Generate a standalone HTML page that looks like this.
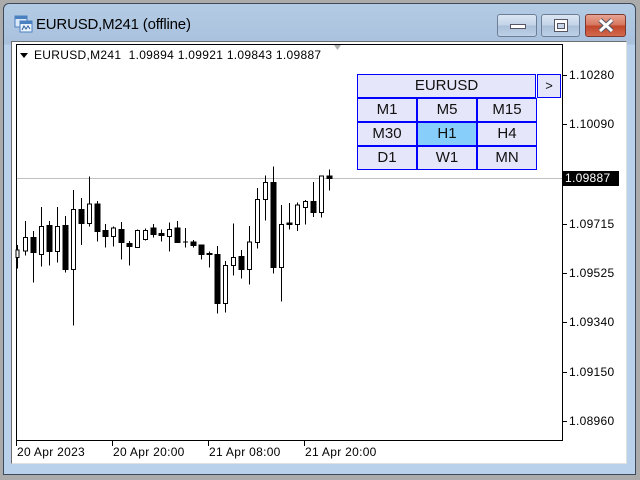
<!DOCTYPE html>
<html><head><meta charset="utf-8"><style>
*{margin:0;padding:0;box-sizing:border-box}
body{width:640px;height:480px;background:#ababab;position:relative;overflow:hidden;font-family:"Liberation Sans",Tahoma,sans-serif}
.frame{position:absolute;left:3px;top:3px;width:633px;height:472px;border:1px solid #3c4a5a;border-radius:6px 6px 0 0;background:linear-gradient(#b4cbe4 0px,#a9c1dd 40px,#b9d1ea 41px,#b9d1ea 100%)}
.client{position:absolute;left:11px;top:41px;width:616px;height:423px;background:#fff;border-left:1px solid #6c6c6c;border-top:1px solid #6c6c6c;border-right:1px solid #e0e0e0;border-bottom:1px solid #e0e0e0}
.title{position:absolute;left:36px;top:16px;font-size:15px;color:#000;letter-spacing:-0.2px}
.btn{position:absolute;top:14px;height:23px;border:1px solid #6d7f96;border-radius:3px;background:linear-gradient(#dbe6f3,#c2d3e8 50%,#aabfd9 51%,#bdd0e6)}
.close{background:linear-gradient(#e8a493,#d4745c 50%,#c0452a 51%,#d36a4e);border-color:#7a3a30}
.t{position:absolute;font-size:12px;color:#000;white-space:nowrap;letter-spacing:0.3px}
.pb{position:absolute;border:1px solid #0000ff;background:#e6e6fa;font-size:15px;text-align:center;line-height:22px;color:#111}
</style></head><body>
<div class="frame"></div>
<svg style="position:absolute;left:14px;top:15px" width="20" height="20">
<rect x="1" y="1" width="12" height="11" fill="#dbe8f8" stroke="#4a7fc0"/><rect x="1" y="1" width="12" height="3" fill="#4a7fc0"/>
<rect x="6" y="6" width="12" height="11" fill="#eaf2fc" stroke="#4a7fc0"/><rect x="6" y="6" width="12" height="3" fill="#4a7fc0"/>
<path d="M8 15 L10 11 L12 14 L14 11 L16 14" stroke="#2a5fa0" fill="none"/></svg>
<div class="title">EURUSD,M241 (offline)</div>
<div class="btn" style="left:497px;width:40px"><div style="position:absolute;left:12px;top:9px;width:16px;height:5px;background:#fff;border:1px solid #556"></div></div>
<div class="btn" style="left:541px;width:39px"><div style="position:absolute;left:12px;top:4px;width:14px;height:13px;background:#fff;border:1px solid #556"></div><div style="position:absolute;left:15px;top:8px;width:8px;height:6px;background:#c8d6e8;border:1px solid #556"></div></div>
<div class="btn close" style="left:585px;width:41px"><svg style="position:absolute;left:12px;top:3px" width="16" height="15"><path d="M2 2 L14 13 M14 2 L2 13" stroke="#556" stroke-width="5"/><path d="M2 2 L14 13 M14 2 L2 13" stroke="#fff" stroke-width="3"/></svg></div>
<div class="client"></div>
<svg style="position:absolute;left:0;top:0" width="640" height="480">
<rect x="16.5" y="44.5" width="546" height="396" fill="none" stroke="#000"/>
<path d="M334 45 L341 45 L337.5 50Z" fill="#b0b0b0"/>
<path d="M20 53 L28 53 L24 58Z" fill="#000"/>
<line x1="17" y1="178.5" x2="562" y2="178.5" stroke="#c0c0c0"/>
<g stroke="#000" shape-rendering="crispEdges">
<line x1="563" y1="75.5" x2="567" y2="75.5"/><line x1="563" y1="124.5" x2="567" y2="124.5"/><line x1="563" y1="224.5" x2="567" y2="224.5"/><line x1="563" y1="273.5" x2="567" y2="273.5"/><line x1="563" y1="322.5" x2="567" y2="322.5"/><line x1="563" y1="372.5" x2="567" y2="372.5"/><line x1="563" y1="421.5" x2="567" y2="421.5"/>
<line x1="16.5" y1="441" x2="16.5" y2="446"/><line x1="112.5" y1="441" x2="112.5" y2="446"/><line x1="208.5" y1="441" x2="208.5" y2="446"/><line x1="304.5" y1="441" x2="304.5" y2="446"/>
</g>
<rect x="563" y="171" width="56" height="15" fill="#000"/>
<g transform="translate(0,160) scale(1,0.33333)" stroke="#000" fill="#000" shape-rendering="crispEdges">
<g>
<line x1="17.5" y1="255" x2="17.5" y2="325" vector-effect="non-scaling-stroke"/><rect x="16" y="270" width="3" height="22" fill="#fff" vector-effect="non-scaling-stroke"/>
<line x1="25.5" y1="183" x2="25.5" y2="287" vector-effect="non-scaling-stroke"/><rect x="23.5" y="232" width="4" height="41" fill="#fff" vector-effect="non-scaling-stroke"/>
<line x1="33.5" y1="213" x2="33.5" y2="368" vector-effect="non-scaling-stroke"/><rect x="31" y="232" width="5" height="46" vector-effect="non-scaling-stroke"/>
<line x1="41.5" y1="141" x2="41.5" y2="320" vector-effect="non-scaling-stroke"/><rect x="39.5" y="199" width="4" height="84" fill="#fff" vector-effect="non-scaling-stroke"/>
<line x1="49.5" y1="183" x2="49.5" y2="317" vector-effect="non-scaling-stroke"/><rect x="47" y="196" width="5" height="79" vector-effect="non-scaling-stroke"/>
<line x1="57.5" y1="141" x2="57.5" y2="307" vector-effect="non-scaling-stroke"/><rect x="55.5" y="199" width="4" height="76" fill="#fff" vector-effect="non-scaling-stroke"/>
<line x1="65.5" y1="168" x2="65.5" y2="337" vector-effect="non-scaling-stroke"/><rect x="63" y="196" width="5" height="132" vector-effect="non-scaling-stroke"/>
<line x1="73.5" y1="90" x2="73.5" y2="497" vector-effect="non-scaling-stroke"/><rect x="71.5" y="148" width="4" height="180" fill="#fff" vector-effect="non-scaling-stroke"/>
<line x1="81.5" y1="114" x2="81.5" y2="255" vector-effect="non-scaling-stroke"/><rect x="79" y="148" width="5" height="42" vector-effect="non-scaling-stroke"/>
<line x1="89.5" y1="50" x2="89.5" y2="200" vector-effect="non-scaling-stroke"/><rect x="87.5" y="132" width="4" height="58" fill="#fff" vector-effect="non-scaling-stroke"/>
<line x1="97.5" y1="123" x2="97.5" y2="245" vector-effect="non-scaling-stroke"/><rect x="95" y="132" width="5" height="83" vector-effect="non-scaling-stroke"/>
<line x1="105.5" y1="192" x2="105.5" y2="263" vector-effect="non-scaling-stroke"/><rect x="103" y="211" width="5" height="19" vector-effect="non-scaling-stroke"/>
<line x1="113.5" y1="200" x2="113.5" y2="260" vector-effect="non-scaling-stroke"/><rect x="111.5" y="204" width="4" height="26" fill="#fff" vector-effect="non-scaling-stroke"/>
<line x1="121.5" y1="186" x2="121.5" y2="299" vector-effect="non-scaling-stroke"/><rect x="119" y="208" width="5" height="40" vector-effect="non-scaling-stroke"/>
<line x1="129.5" y1="243" x2="129.5" y2="317" vector-effect="non-scaling-stroke"/><rect x="127" y="250" width="5" height="10" vector-effect="non-scaling-stroke"/>
<line x1="137.5" y1="208" x2="137.5" y2="263" vector-effect="non-scaling-stroke"/><rect x="135.5" y="211" width="4" height="52" fill="#fff" vector-effect="non-scaling-stroke"/>
<line x1="145.5" y1="206" x2="145.5" y2="241" vector-effect="non-scaling-stroke"/><rect x="143.5" y="211" width="4" height="27" fill="#fff" vector-effect="non-scaling-stroke"/>
<line x1="153.5" y1="192" x2="153.5" y2="233" vector-effect="non-scaling-stroke"/><rect x="151" y="204" width="5" height="20" vector-effect="non-scaling-stroke"/>
<line x1="161.5" y1="208" x2="161.5" y2="245" vector-effect="non-scaling-stroke"/><rect x="159" y="220" width="5" height="7" vector-effect="non-scaling-stroke"/>
<line x1="169.5" y1="188" x2="169.5" y2="275" vector-effect="non-scaling-stroke"/><rect x="167.5" y="208" width="4" height="22" fill="#fff" vector-effect="non-scaling-stroke"/>
<line x1="177.5" y1="183" x2="177.5" y2="248" vector-effect="non-scaling-stroke"/><rect x="175" y="204" width="5" height="44" vector-effect="non-scaling-stroke"/>
<line x1="185.5" y1="204" x2="185.5" y2="263" vector-effect="non-scaling-stroke"/><line x1="183" y1="246" x2="188" y2="246" vector-effect="non-scaling-stroke"/>
<line x1="193.5" y1="240" x2="193.5" y2="263" vector-effect="non-scaling-stroke"/><rect x="191" y="246" width="5" height="11" vector-effect="non-scaling-stroke"/>
<line x1="201.5" y1="255" x2="201.5" y2="298" vector-effect="non-scaling-stroke"/><rect x="199" y="255" width="5" height="28" vector-effect="non-scaling-stroke"/>
<line x1="209.5" y1="275" x2="209.5" y2="323" vector-effect="non-scaling-stroke"/><rect x="207" y="280" width="5" height="4" vector-effect="non-scaling-stroke"/>
<line x1="217.5" y1="258" x2="217.5" y2="461" vector-effect="non-scaling-stroke"/><rect x="215" y="283" width="5" height="148" vector-effect="non-scaling-stroke"/>
<line x1="225.5" y1="303" x2="225.5" y2="458" vector-effect="non-scaling-stroke"/><rect x="223.5" y="316" width="4" height="115" fill="#fff" vector-effect="non-scaling-stroke"/>
<line x1="233.5" y1="191" x2="233.5" y2="347" vector-effect="non-scaling-stroke"/><rect x="231.5" y="292" width="4" height="24" fill="#fff" vector-effect="non-scaling-stroke"/>
<line x1="241.5" y1="270" x2="241.5" y2="355" vector-effect="non-scaling-stroke"/><rect x="239" y="289" width="5" height="39" vector-effect="non-scaling-stroke"/>
<line x1="249.5" y1="198" x2="249.5" y2="373" vector-effect="non-scaling-stroke"/><rect x="247.5" y="246" width="4" height="82" fill="#fff" vector-effect="non-scaling-stroke"/>
<line x1="257.5" y1="84" x2="257.5" y2="266" vector-effect="non-scaling-stroke"/><rect x="255.5" y="118" width="4" height="129" fill="#fff" vector-effect="non-scaling-stroke"/>
<line x1="265.5" y1="47" x2="265.5" y2="181" vector-effect="non-scaling-stroke"/><rect x="263.5" y="67" width="4" height="51" fill="#fff" vector-effect="non-scaling-stroke"/>
<line x1="273.5" y1="20" x2="273.5" y2="340" vector-effect="non-scaling-stroke"/><rect x="271" y="67" width="5" height="256" vector-effect="non-scaling-stroke"/>
<line x1="281.5" y1="135" x2="281.5" y2="425" vector-effect="non-scaling-stroke"/><rect x="279.5" y="193" width="4" height="130" fill="#fff" vector-effect="non-scaling-stroke"/>
<line x1="289.5" y1="129" x2="289.5" y2="208" vector-effect="non-scaling-stroke"/><rect x="287" y="189" width="5" height="4" vector-effect="non-scaling-stroke"/>
<line x1="297.5" y1="128" x2="297.5" y2="213" vector-effect="non-scaling-stroke"/><rect x="295.5" y="135" width="4" height="58" fill="#fff" vector-effect="non-scaling-stroke"/>
<line x1="305.5" y1="120" x2="305.5" y2="193" vector-effect="non-scaling-stroke"/><rect x="303.5" y="124" width="4" height="18" fill="#fff" vector-effect="non-scaling-stroke"/>
<line x1="313.5" y1="66" x2="313.5" y2="171" vector-effect="non-scaling-stroke"/><rect x="311" y="124" width="5" height="33" vector-effect="non-scaling-stroke"/>
<line x1="321.5" y1="48" x2="321.5" y2="173" vector-effect="non-scaling-stroke"/><rect x="319.5" y="48" width="4" height="109" fill="#fff" vector-effect="non-scaling-stroke"/>
<line x1="329.5" y1="28" x2="329.5" y2="92" vector-effect="non-scaling-stroke"/><rect x="327" y="48" width="5" height="8" vector-effect="non-scaling-stroke"/>
</g></g>
</svg>
<div class="t" style="left:34px;top:48px">EURUSD,M241&nbsp;&nbsp;1.09894 1.09921 1.09843 1.09887</div>
<div class="t" style="left:569px;top:68px">1.10280</div>
<div class="t" style="left:569px;top:117px">1.10090</div>
<div class="t" style="left:565px;top:171px;color:#fff">1.09887</div>
<div class="t" style="left:569px;top:217px">1.09715</div>
<div class="t" style="left:569px;top:266px">1.09525</div>
<div class="t" style="left:569px;top:315px">1.09340</div>
<div class="t" style="left:569px;top:365px">1.09150</div>
<div class="t" style="left:569px;top:414px">1.08960</div>
<div class="t" style="left:17px;top:445px">20 Apr 2023</div>
<div class="t" style="left:113px;top:445px">20 Apr 20:00</div>
<div class="t" style="left:209px;top:445px">21 Apr 08:00</div>
<div class="t" style="left:305px;top:445px">21 Apr 20:00</div>
<div class="pb" style="left:357px;top:74px;width:179px;height:24px">EURUSD</div>
<div class="pb" style="left:537px;top:74px;width:24px;height:24px;font-size:13px">&gt;</div>
<div class="pb" style="left:357px;top:98px;width:60px;height:24px">M1</div>
<div class="pb" style="left:417px;top:98px;width:60px;height:24px">M5</div>
<div class="pb" style="left:477px;top:98px;width:60px;height:24px">M15</div>
<div class="pb" style="left:357px;top:122px;width:60px;height:24px">M30</div>
<div class="pb" style="left:417px;top:122px;width:60px;height:24px;background:#87cefa">H1</div>
<div class="pb" style="left:477px;top:122px;width:60px;height:24px">H4</div>
<div class="pb" style="left:357px;top:146px;width:60px;height:24px">D1</div>
<div class="pb" style="left:417px;top:146px;width:60px;height:24px">W1</div>
<div class="pb" style="left:477px;top:146px;width:60px;height:24px">MN</div>
</body></html>
